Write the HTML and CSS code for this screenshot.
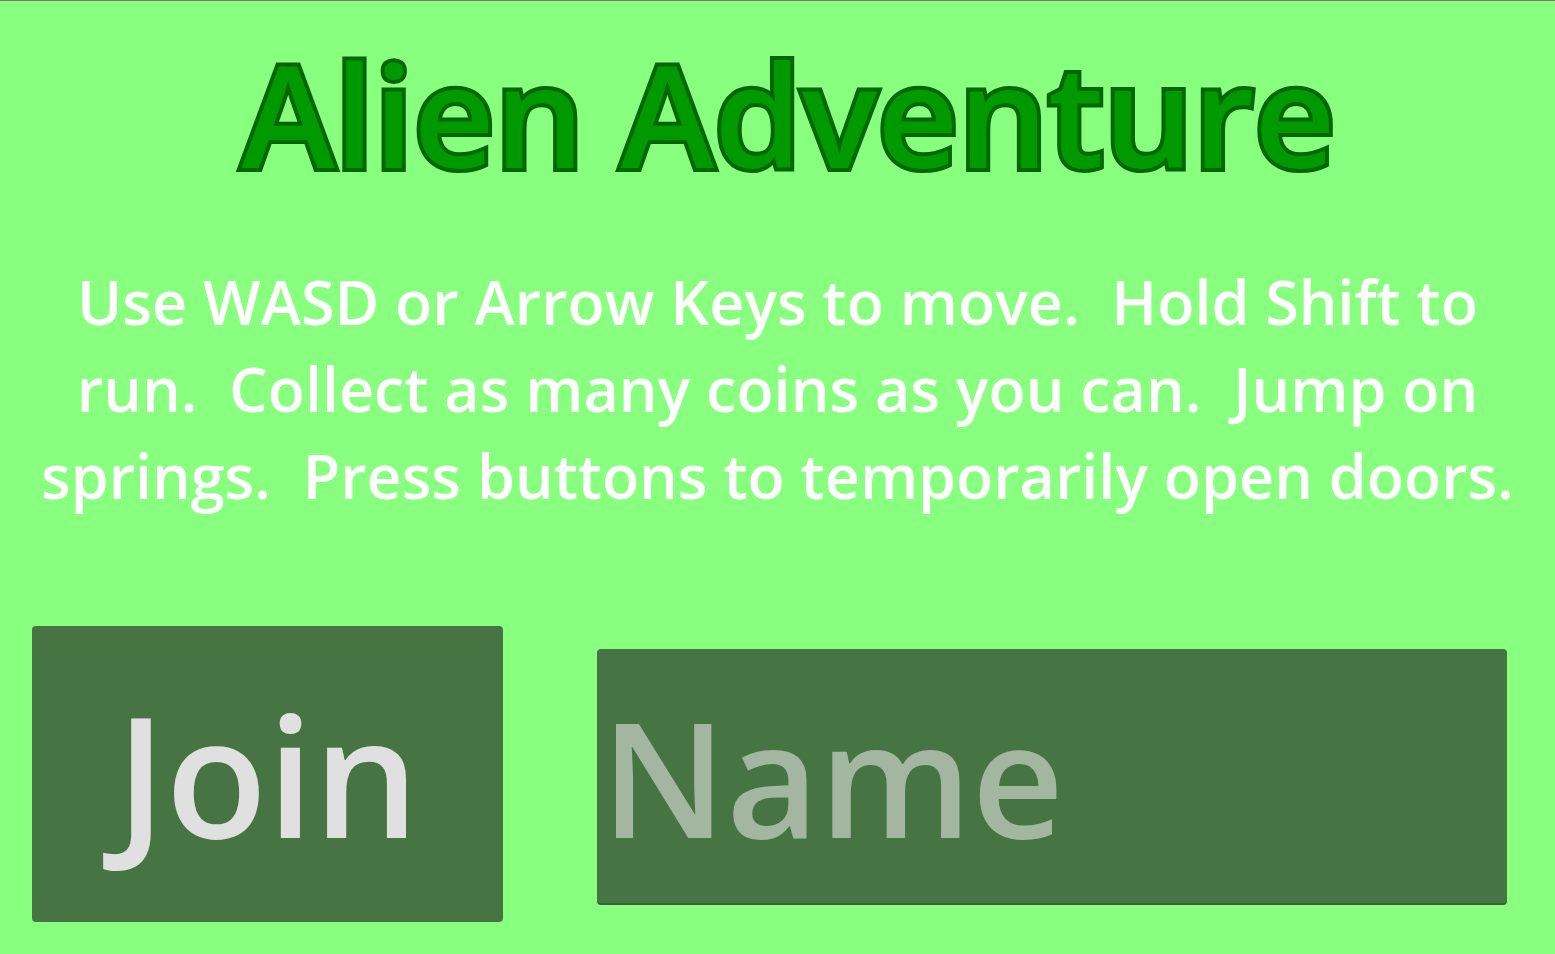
FILE: index.html
```html
<!DOCTYPE html>
<html lang="en">
<head>
<meta charset="utf-8">
<title>Alien Adventure</title>
<link rel="stylesheet" href="styles.css">
</head>
<body>
<div class="screen">
  <h1 class="title">Alien Adventure</h1>
  <p class="help">Use WASD or Arrow Keys to move.&nbsp; Hold Shift to run.&nbsp; Collect as many coins as you can.&nbsp; Jump on springs.&nbsp; Press buttons to temporarily open doors.</p>
  <div class="controls">
    <button class="join" type="button">Join</button>
    <input class="name" type="text" placeholder="Name">
  </div>
</div>
</body>
</html>
```

FILE: styles.css
```css
html, body {
  margin: 0;
  padding: 0;
  background: #89ff80;
}

.screen {
  box-sizing: border-box;
  width: 1555px;
  height: 954px;
  border-top: 1px solid #7a7a7a;
  font-family: "Open Sans", "Noto Sans", sans-serif;
  display: flex;
  flex-direction: column;
  align-items: center;
}

.title {
  margin: 28px 0 0 22px;
  font-size: 141px;
  font-weight: 600;
  line-height: 1.2;
  color: #009a00;
  -webkit-text-stroke: 8px #006600;
  paint-order: stroke fill;
}

.help {
  margin: 60px 0 0;
  width: 1540px;
  text-align: center;
  color: #ffffff;
  font-size: 61px;
  font-weight: 600;
  line-height: 87px;
}

.controls {
  align-self: stretch;
  display: flex;
  align-items: center;
  gap: 94px;
  padding-left: 32px;
  margin-top: 107px;
}

.join {
  width: 471px;
  height: 296px;
  border: none;
  border-radius: 4px;
  background: #467442;
  color: #e0e0e0;
  font-family: "Open Sans", "Noto Sans", sans-serif;
  font-size: 166px;
  font-weight: 600;
  padding: 0;
}

.name {
  box-sizing: border-box;
  width: 910px;
  height: 256px;
  margin-top: 6px;
  border: none;
  border-bottom: 2px solid #3b5e37;
  border-radius: 4px;
  background: #467442;
  font-family: "Open Sans", "Noto Sans", sans-serif;
  font-size: 160px;
  font-weight: 600;
  padding: 0 0 0 4px;
  color: #e0e0e0;
  outline: none;
}

.name::placeholder {
  color: #a2b6a0;
  opacity: 1;
}
```
